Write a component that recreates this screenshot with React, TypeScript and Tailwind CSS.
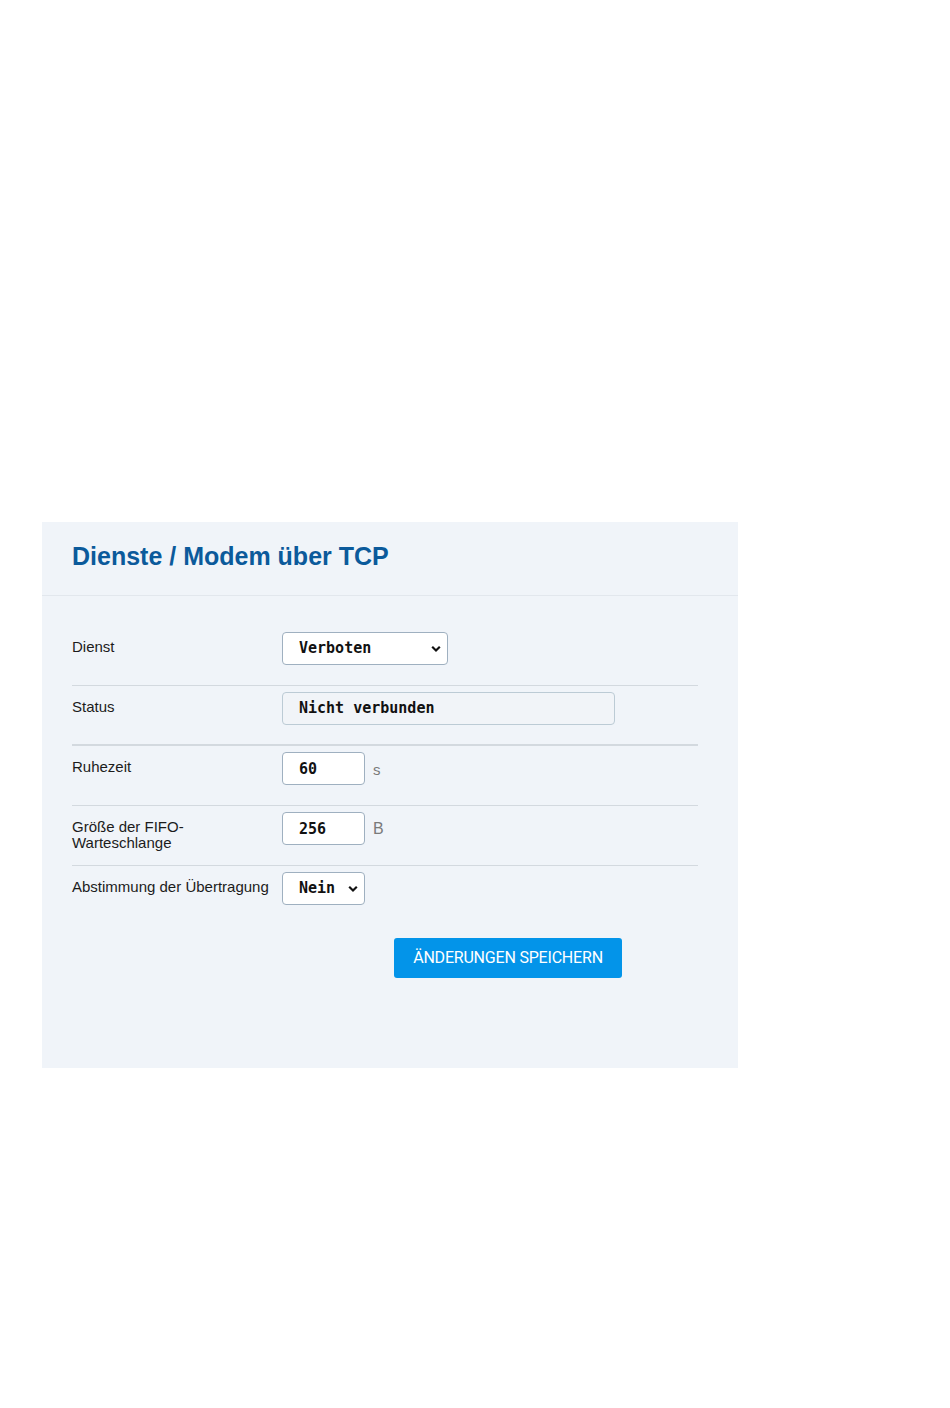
import { useState } from "react";

const label = "font-['Liberation_Sans',Arial,sans-serif] text-[15px] leading-[16px] text-[#1c1c1c]";
const mono = "font-['DejaVu_Sans_Mono',monospace] text-[15px] font-bold text-[#111]";

function Chevron() {
  return (
    <svg width="10" height="7" viewBox="0 0 10 7" className="pointer-events-none absolute right-[7px] top-1/2 -translate-y-1/2">
      <path d="M1.2 1.3 L5 5 L8.8 1.3" fill="none" stroke="#111" strokeWidth="2.2" />
    </svg>
  );
}

function Select({ value, options, width }: { value: string; options: string[]; width: string }) {
  const [v, setV] = useState(value);
  return (
    <div className={`relative ${width}`}>
      <select
        value={v}
        onChange={(e) => setV(e.target.value)}
        className={`h-[33px] w-full appearance-none rounded-[4px] border border-[#9fb0c0] bg-white pl-[16px] pr-[24px] ${mono}`}
      >
        {options.map((o) => (
          <option key={o}>{o}</option>
        ))}
      </select>
      <Chevron />
    </div>
  );
}

function Row({ name, children, last, thick }: { name: React.ReactNode; children: React.ReactNode; last?: boolean; thick?: boolean }) {
  return (
    <div
      className={`flex h-[60px] pt-[6px] ${last ? "" : thick ? "border-b-2 border-[#d3d9df]" : "border-b border-[#d3d9df]"}`}
    >
      <div className={`w-[204px] pt-[7px] ${label}`}>{name}</div>
      <div className="ml-[6px] flex items-start">{children}</div>
    </div>
  );
}

export default function App() {
  return (
    <div className="min-h-[1408px] bg-white pl-[42px] pt-[522px]">
      <div className="h-[546px] w-[696px] bg-[#f0f4f9]">
        <div className="flex h-[74px] items-center border-b border-[#e2e7ed] px-[30px] pb-[4px]">
          <h1 className="font-['Liberation_Sans',Arial,sans-serif] text-[25px] font-bold text-[#0b5a9b]">
            Dienste / Modem über TCP
          </h1>
        </div>
        <div className="px-[30px] pt-[30px] pr-[40px]">
          <Row name="Dienst">
            <Select value="Verboten" options={["Verboten", "Erlaubt"]} width="w-[166px]" />
          </Row>
          <Row name="Status" thick>
            <div className={`flex h-[33px] w-[333px] items-center rounded-[4px] border border-[#bccbd5] bg-[#f1f4f8] pl-[16px] ${mono}`}>
              Nicht verbunden
            </div>
          </Row>
          <Row name="Ruhezeit">
            <input
              defaultValue="60"
              className={`h-[33px] w-[83px] rounded-[4px] border border-[#9fb0c0] bg-white pl-[16px] ${mono}`}
            />
            <span className="ml-[8px] pt-[7px] font-['Liberation_Sans',Arial,sans-serif] text-[15px] text-[#7a7a7a]">s</span>
          </Row>
          <Row name={<>Größe der FIFO-Warteschlange</>}>
            <input
              defaultValue="256"
              className={`h-[33px] w-[83px] rounded-[4px] border border-[#9fb0c0] bg-white pl-[16px] ${mono}`}
            />
            <span className="ml-[8px] pt-[5px] font-['Liberation_Sans',Arial,sans-serif] text-[16px] text-[#7a7a7a]">B</span>
          </Row>
          <Row name="Abstimmung der Übertragung" last>
            <Select value="Nein" options={["Nein", "Ja"]} width="w-[83px]" />
          </Row>
          <div className="mt-[12px] pl-[322px]">
            <button
              type="button"
              className="h-[40px] w-[228px] rounded-[3px] bg-[#0394e9] font-['Roboto',sans-serif] text-[16px] tracking-[-0.2px] text-white uppercase"
            >
              Änderungen speichern
            </button>
          </div>
        </div>
      </div>
    </div>
  );
}
